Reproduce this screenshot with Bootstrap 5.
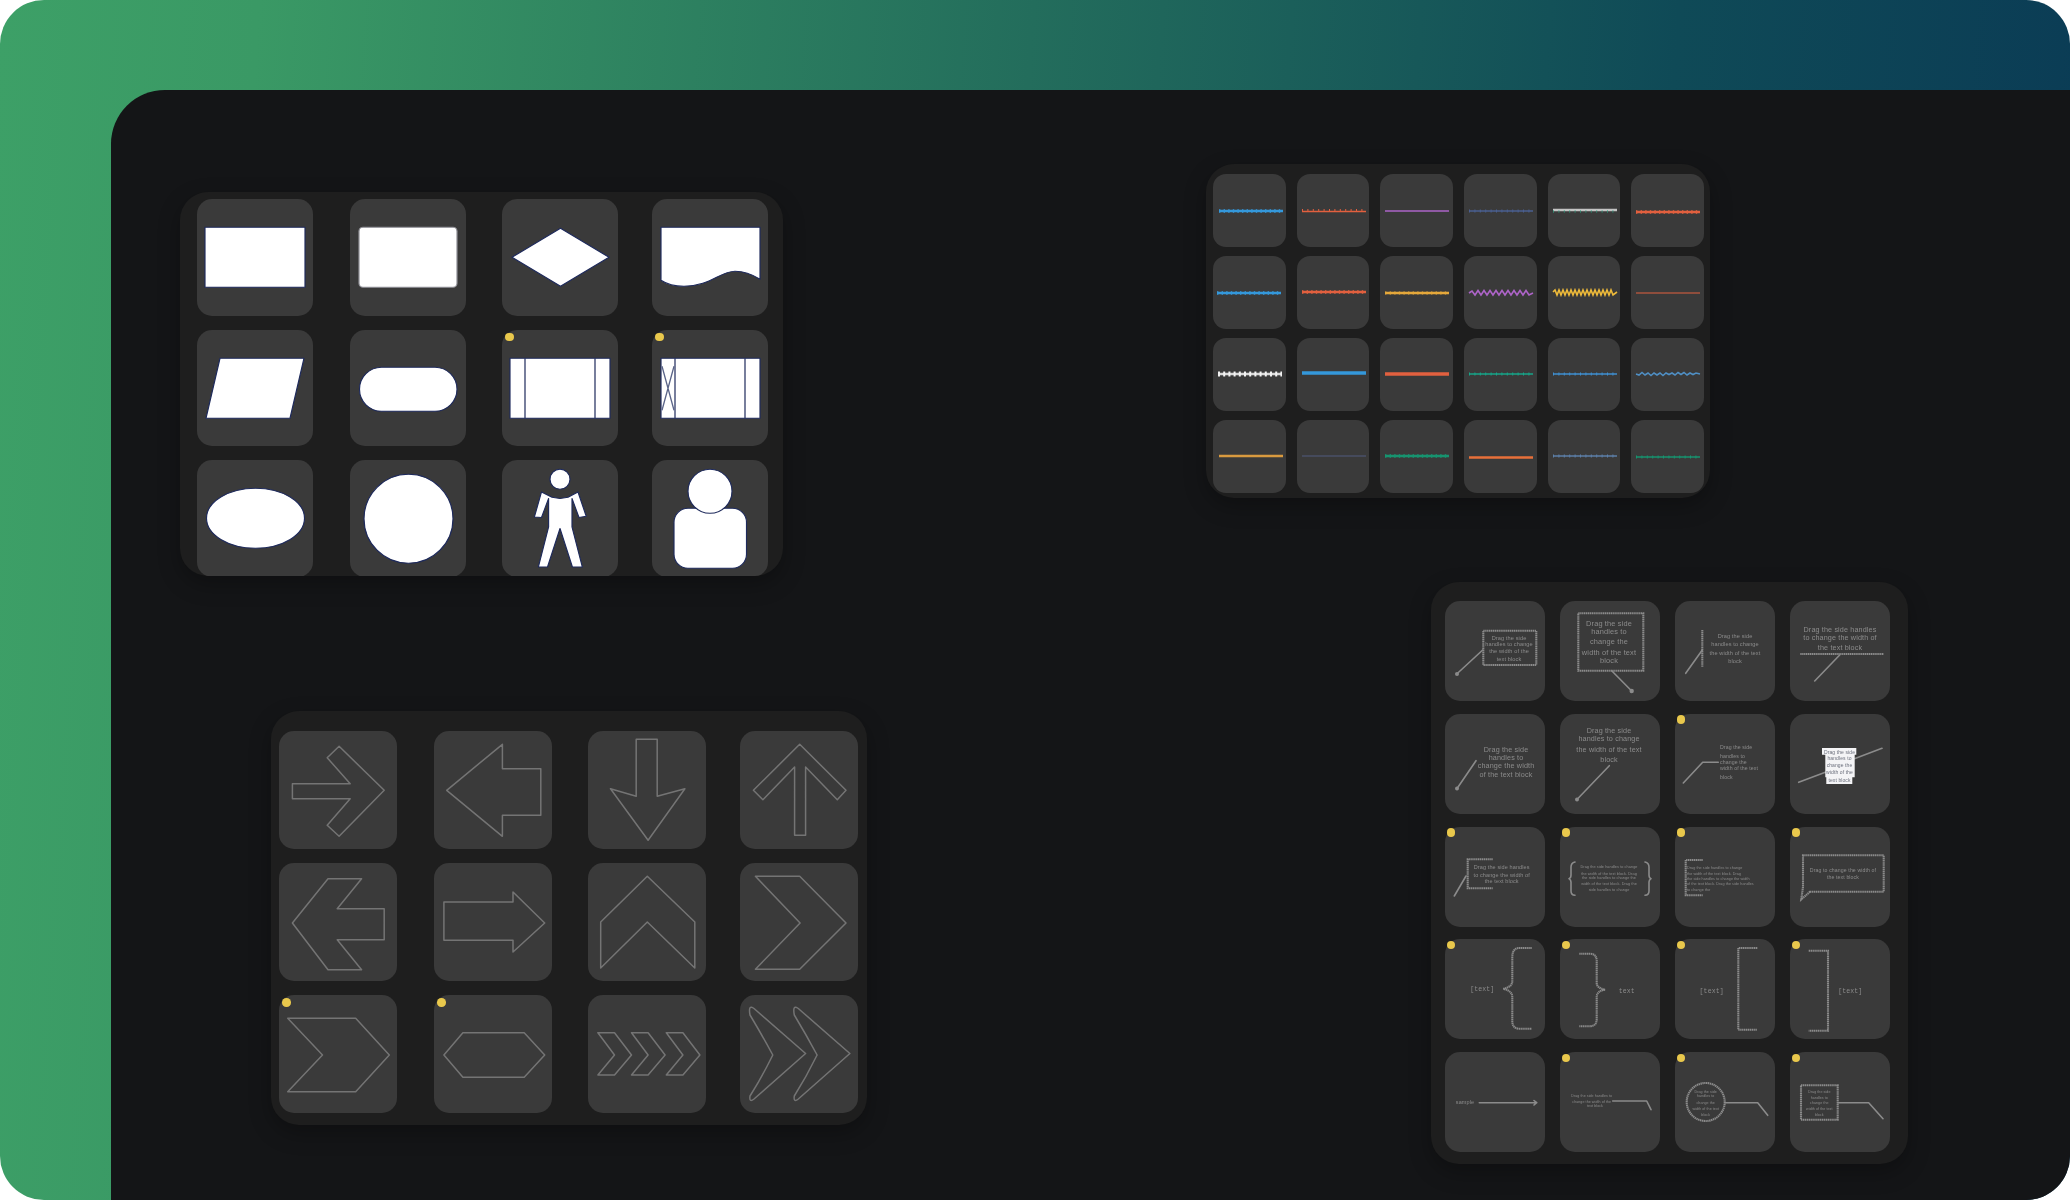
<!DOCTYPE html>
<html lang="en">
<head>
<meta charset="utf-8">
<title>Shape libraries</title>
<link href="https://cdn.jsdelivr.net/npm/bootstrap@5.3.0/dist/css/bootstrap.min.css" rel="stylesheet">
<style>
html,body{height:1200px;background:#fff;overflow:hidden}
.stage{width:2070px;height:1200px;border-radius:44px;padding:90px 0 0 111px;background:linear-gradient(94deg,#3da067 0,#3a9965 12%,#236d5c 48%,#0f4a57 78%,#0a3a55 100%)}
.board{height:1110px;background:#141517;border-top-left-radius:54px}
.col-left{width:1095px}
.shelf{background:#1e1e1e;border-radius:28px;box-shadow:0 8px 22px rgba(0,0,0,.28);overflow:hidden;display:grid}
.tile{background:#3a3a3a;border-radius:15px;position:relative}
.tile svg{display:block;width:100%;height:100%;overflow:visible;filter:blur(.35px)}
.pin{position:absolute;width:8.5px;height:8.5px;border-radius:50%;background:#e9c84c;left:3px;top:3px}
.shelf-a{width:603px;height:384px;margin:102px 0 0 69px;padding:7px 0 0 17px;grid-template-columns:153px 152px 150px 116px;grid-auto-rows:116.5px;row-gap:14px}
.shelf-a .tile{width:116px}
.shelf-b{width:596px;height:414px;margin:135px 0 0 160px;padding:20px 0 0 8px;grid-template-columns:155px 154px 152px 117px;grid-auto-rows:117.5px;row-gap:14.5px}
.shelf-b .tile{width:117.5px}
.shelf-c{width:504px;height:334px;margin-top:74px;padding:10px 0 0 7px;grid-template-columns:repeat(6,72.5px);grid-auto-rows:72.5px;column-gap:11.2px;row-gap:9.5px}
.shelf-d{width:477px;height:582px;margin:84px 0 0 225px;padding:19px 0 0 14px;grid-template-columns:repeat(4,100px);grid-auto-rows:100px;column-gap:15px;row-gap:12.75px}
.shelf-c .tile{border-radius:13px}
.shelf-d .pin{left:1.5px;top:1.5px}
.shelf-d .tile svg{filter:blur(.6px)}
.solid{fill:#fff;stroke:#1e2a5c;stroke-width:1.15;stroke-linejoin:round}
.solid-soft{fill:#fff;stroke:#8f8f96;stroke-width:1.2}
.thin{fill:none;stroke:#1e2a5c;stroke-width:1.2}
.thin-x{fill:none;stroke:#5a6488;stroke-width:1.3}
.outline{fill:none;stroke:#747474;stroke-width:1.5;stroke-linejoin:round}
.wire{fill:none;stroke:#8b8b8b;stroke-width:1.6;stroke-linejoin:round;stroke-linecap:round}
.frame{fill:none;stroke:#8b8b8b;stroke-width:2.1;stroke-dasharray:1.4 .5}
.lead{fill:#8b8b8b}
.words{fill:#8c8c8c;font-family:"Liberation Sans",Arial,sans-serif;text-anchor:middle;dominant-baseline:central;letter-spacing:.02em}
.words-start{text-anchor:start}
.words-dark{fill:#6b6f7c}
.words-mono{font-family:"Liberation Mono","Courier New",monospace;font-size:6.5px}
.stripe{fill:none;stroke-width:1.6}
.stripe-hair{fill:none;stroke-width:1.1}
.stripe-fat{fill:none;stroke-width:2.6}
.stripe-bold{fill:none;stroke-width:3.4}
.ticks{fill:none;stroke-width:3.6;stroke-dasharray:1.4 3.2}
.ticks-wide{fill:none;stroke-width:5;stroke-dasharray:2 3.2}
.ticks-fine{fill:none;stroke-width:3;stroke-dasharray:1 4.4}
</style>
</head>
<body class="m-0">
<div class="stage overflow-hidden">
<main class="board d-flex">
<div class="col-left">

<section class="shelf shelf-a">
<div class="tile"><svg viewBox="0 0 116 116"><rect class="solid" x="8" y="28" width="100" height="60"/></svg></div>
<div class="tile"><svg viewBox="0 0 116 116"><rect class="solid-soft" x="9" y="28" width="98" height="60" rx="4"/></svg></div>
<div class="tile"><svg viewBox="0 0 116 116"><polygon class="solid" points="58.5,29 107,58 58.5,87 10,58"/></svg></div>
<div class="tile"><svg viewBox="0 0 116 116"><path class="solid" d="M9 28H108V80C100 75 92 72 83 72C68 72 58 87 32 87C22 87 15 85 9 81Z"/></svg></div>

<div class="tile"><svg viewBox="0 0 116 116"><polygon class="solid" points="23,28 107,28 93,88 9,88"/></svg></div>
<div class="tile"><svg viewBox="0 0 116 116"><rect class="solid" x="9.5" y="37" width="97.5" height="44" rx="22"/></svg></div>
<div class="tile"><span class="pin"></span><svg viewBox="0 0 116 116"><rect class="solid" x="8" y="28" width="100" height="60"/><path class="thin" d="M23 28V88M93 28V88"/></svg></div>
<div class="tile"><span class="pin"></span><svg viewBox="0 0 116 116"><rect class="solid" x="9" y="28" width="99" height="60"/><path class="thin" d="M23 28V88M93 28V88"/><path class="thin-x" d="M10 36L22 80M22 36L10 80"/></svg></div>

<div class="tile"><svg viewBox="0 0 116 116"><ellipse class="solid" cx="58.5" cy="58" rx="49" ry="30"/></svg></div>
<div class="tile"><svg viewBox="0 0 116 116"><circle class="solid" cx="58.5" cy="58.5" r="44.5"/></svg></div>
<div class="tile"><svg viewBox="0 0 116 116"><polygon class="solid" points="39.5,31.7 32.4,56.7 39.5,57.3 46.6,38.3 46.6,66.7 36.4,106.7 45.5,106.7 58,68.3 70.4,106.7 80.3,106.7 70,66.7 70,38.3 77,57.3 84.2,56 76,31.7 66,37 58,38.3 50,37"/><circle class="solid" cx="58" cy="19" r="10"/></svg></div>
<div class="tile"><svg viewBox="0 0 116 116"><rect class="solid" x="22" y="48" width="72.5" height="60" rx="14"/><circle class="solid" cx="58" cy="31" r="22"/></svg></div>
</section>

<section class="shelf shelf-b">
<div class="tile"><svg viewBox="0 0 117.5 117.5"><polygon class="outline" points="13.4,52.7 71.2,52.7 48.2,26.7 60.1,15.3 105.2,59.3 60.1,105.3 48.2,94.3 71.2,67.7 13.4,67.7"/></svg></div>
<div class="tile"><svg viewBox="0 0 117.5 117.5"><polygon class="outline" points="12.7,59.3 68.4,13.3 68.4,37.7 106.8,37.7 106.8,84.3 68.4,84.3 68.4,105.3"/></svg></div>
<div class="tile"><svg viewBox="0 0 117.5 117.5"><polygon class="outline" points="48.2,8.3 69.2,8.3 69.2,65.3 96.9,57.7 60.1,109.3 22.5,57.7 48.2,65.3"/></svg></div>
<div class="tile"><svg viewBox="0 0 117.5 117.5"><polygon class="outline" points="59.7,13.3 106,59.3 97.3,68.7 65.6,36 65.6,104.3 54.6,104.3 54.6,36 22.9,68.7 13.4,59.3"/></svg></div>

<div class="tile"><svg viewBox="0 0 117.5 117.5"><polygon class="outline" points="13.4,60 49,15.7 82.6,15.7 58.2,45.7 105.2,45.7 105.2,76.7 58.2,76.7 82.6,106.7 49,106.7"/></svg></div>
<div class="tile"><svg viewBox="0 0 117.5 117.5"><polygon class="outline" points="9.9,39 79,39 79,29 110.7,60 79,89 79,77.3 9.9,77.3"/></svg></div>
<div class="tile"><svg viewBox="0 0 117.5 117.5"><polygon class="outline" points="59.3,13.3 106.8,59 106.8,105 59.3,59 12.7,105 12.7,59"/></svg></div>
<div class="tile"><svg viewBox="0 0 117.5 117.5"><polygon class="outline" points="15.4,13.3 59.7,13.3 106,60 59.7,106.3 15.4,106.3 60.1,60"/></svg></div>

<div class="tile"><span class="pin"></span><svg viewBox="0 0 117.5 117.5"><polygon class="outline" points="8.7,23.3 76.7,23.3 110.3,60 76.7,96.7 8.7,96.7 43.5,60"/></svg></div>
<div class="tile"><span class="pin"></span><svg viewBox="0 0 117.5 117.5"><polygon class="outline" points="9.9,60 28.9,37.7 90.2,37.7 110.7,60 90.2,82.3 28.9,82.3"/></svg></div>
<div class="tile"><svg viewBox="0 0 117.5 117.5"><polygon class="outline" points="9.9,37.7 26.5,37.7 43.5,60 26.5,80 9.9,80 26.5,60"/><polygon class="outline" points="43.5,37.7 60.1,37.7 77.1,60 60.1,80 43.5,80 60.1,60"/><polygon class="outline" points="78.3,37.7 94.9,37.7 111.9,60 94.9,80 78.3,80 94.9,60"/></svg></div>
<div class="tile"><svg viewBox="0 0 117.5 117.5"><path class="outline" d="M14 13.5L65.6 58.5L14 104Q9 108 10 101Q22 82 32.8 60Q22 40 10 20Q8 9 14 13.5Z"/><path class="outline" d="M58.3 13.5L109.9 58.5L58.3 104Q53.3 108 54.3 101Q66.3 82 77.1 60Q66.3 40 54.3 20Q52.3 9 58.3 13.5Z"/></svg></div>
</section>
</div>

<div>
<section class="shelf shelf-c">
<div class="tile"><svg viewBox="0 0 72.5 72.5"><g stroke="#3498db"><path class="stripe-fat" d="M6 37H70"/><path class="ticks" d="M6 37H70"/></g></svg></div>
<div class="tile"><svg viewBox="0 0 72.5 72.5"><g stroke="#e2603f"><path class="stripe" d="M5 37.5H69"/><path class="ticks-fine" d="M5 36.5H69"/></g></svg></div>
<div class="tile"><svg viewBox="0 0 72.5 72.5"><path class="stripe" stroke="#ad64c8" d="M5 37H69"/></svg></div>
<div class="tile"><svg viewBox="0 0 72.5 72.5"><g stroke="#4a5f90"><path class="stripe" d="M5 37H69"/><path class="ticks-fine" d="M5 37H69"/></g></svg></div>
<div class="tile"><svg viewBox="0 0 72.5 72.5"><path class="stripe-fat" stroke="#c4c4c4" d="M5 36H69"/><path class="ticks-fine" stroke="#25a27f" stroke-opacity=".55" d="M5 37.5H69"/></svg></div>
<div class="tile"><svg viewBox="0 0 72.5 72.5"><g stroke="#e2603f"><path class="stripe-fat" d="M5 38H69"/><path class="ticks" d="M5 38H69"/></g></svg></div>

<div class="tile"><svg viewBox="0 0 72.5 72.5"><g stroke="#3498db"><path class="stripe-fat" d="M4 37H68"/><path class="ticks" d="M4 37H68"/></g></svg></div>
<div class="tile"><svg viewBox="0 0 72.5 72.5"><g stroke="#e2603f"><path class="stripe-fat" d="M5 36H69"/><path class="ticks" d="M5 36H69"/></g></svg></div>
<div class="tile"><svg viewBox="0 0 72.5 72.5"><g stroke="#e5a83b"><path class="stripe-fat" d="M5 37H69"/><path class="ticks" stroke-opacity=".6" d="M5 37H69"/></g></svg></div>
<div class="tile"><svg viewBox="0 0 72.5 72.5"><polyline class="stripe" stroke="#ad64c8" points="5,37 8,35 11,39 14,34.5 17,39 20,34.5 23,39 26,34.5 29,39 32,34.5 35,39 38,34.5 41,39 44,34.5 47,39 50,34.5 53,39 56,34.5 59,39 62,34.5 65,39 69,37"/></svg></div>
<div class="tile"><svg viewBox="0 0 72.5 72.5"><polyline class="stripe" stroke="#ecb93a" points="5,36 7,34 9,39 11,34 13,39 15,34 17,39 19,34 21,39 23,34 25,39 27,34 29,39 31,34 33,39 35,34 37,39 39,34 41,39 43,34 45,39 47,34 49,39 51,34 53,39 55,34 57,39 59,34 61,39 63,34 65,39 69,36"/></svg></div>
<div class="tile"><svg viewBox="0 0 72.5 72.5"><path class="stripe-hair" stroke="#e2603f" d="M5 37H69"/></svg></div>

<div class="tile"><svg viewBox="0 0 72.5 72.5"><path class="stripe-fat" stroke="#d8d8d8" d="M5 36H69"/><path class="ticks-wide" stroke="#f2f2f2" d="M5 36H69"/></svg></div>
<div class="tile"><svg viewBox="0 0 72.5 72.5"><path class="stripe-bold" stroke="#3498db" d="M5 35H69"/></svg></div>
<div class="tile"><svg viewBox="0 0 72.5 72.5"><path class="stripe-bold" stroke="#e2603f" d="M5 36H69"/></svg></div>
<div class="tile"><svg viewBox="0 0 72.5 72.5"><g stroke="#17a589"><path class="stripe" d="M5 36H69"/><path class="ticks-fine" d="M5 36H69"/></g></svg></div>
<div class="tile"><svg viewBox="0 0 72.5 72.5"><g stroke="#3f8fd0"><path class="stripe" d="M5 36H69"/><path class="ticks-fine" d="M5 36H69"/></g></svg></div>
<div class="tile"><svg viewBox="0 0 72.5 72.5"><polyline class="stripe" stroke="#4f8fc4" points="5,36 8,37 11,34.5 14,37 17,35 20,37.5 23,35 26,37 29,35 32,37.5 35,35 38,36.5 41,35 44,37 47,34.5 50,36.5 53,34.5 56,37 59,35 62,36.5 65,35 69,36"/></svg></div>

<div class="tile"><svg viewBox="0 0 72.5 72.5"><path class="stripe-fat" stroke="#d99a3f" d="M6 36H70"/></svg></div>
<div class="tile"><svg viewBox="0 0 72.5 72.5"><path class="stripe" stroke="#4a5068" d="M5 36H69"/></svg></div>
<div class="tile"><svg viewBox="0 0 72.5 72.5"><g stroke="#17936f"><path class="stripe-fat" d="M5 36H69"/><path class="ticks" d="M5 36H69"/></g></svg></div>
<div class="tile"><svg viewBox="0 0 72.5 72.5"><path class="stripe-fat" stroke="#e8703a" d="M5 37.5H69"/></svg></div>
<div class="tile"><svg viewBox="0 0 72.5 72.5"><g stroke="#5d7fa8"><path class="stripe" d="M5 36H69"/><path class="ticks-fine" d="M5 36H69"/></g></svg></div>
<div class="tile"><svg viewBox="0 0 72.5 72.5"><g stroke="#17936f"><path class="stripe" d="M5 37H69"/><path class="ticks-fine" d="M5 37H69"/></g></svg></div>
</section>

<section class="shelf shelf-d">
<div class="tile"><svg viewBox="0 0 100 100"><rect class="frame" x="38.3" y="29.7" width="53" height="34.3"/><path class="wire" d="M37.7 49L11.7 73"/><circle class="lead" cx="12" cy="73" r="2"/><g class="words" font-size="5.6"><text x="64" y="37">Drag the side</text><text x="64" y="43.3">handles to change</text><text x="64" y="50">the width of the</text><text x="64" y="58">text block</text></g></svg></div>
<div class="tile"><svg viewBox="0 0 100 100"><rect class="frame" x="18.3" y="12.3" width="65" height="57.4"/><path class="wire" d="M51.7 69.7L71.7 90"/><circle class="lead" cx="71.7" cy="90" r="2.2"/><g class="words" font-size="7.4"><text x="49" y="22.3">Drag the side</text><text x="49" y="30.7">handles to</text><text x="49" y="40.7">change the</text><text x="49" y="51.3">width of the text</text><text x="49" y="59.3">block</text></g></svg></div>
<div class="tile"><svg viewBox="0 0 100 100"><path class="frame" d="M27.3 29V65.7"/><path class="wire" d="M27.3 49L10.7 72.3"/><g class="words" font-size="5.6"><text x="60" y="35">Drag the side</text><text x="60" y="43.3">handles to change</text><text x="60" y="51.7">the width of the text</text><text x="60" y="60">block</text></g></svg></div>
<div class="tile"><svg viewBox="0 0 100 100"><path class="frame" d="M10.3 53H93.7"/><path class="wire" d="M49.7 54L24.7 80"/><g class="words" font-size="7.2"><text x="50" y="28">Drag the side handles</text><text x="50" y="36.7">to change the width of</text><text x="50" y="46.7">the text block</text></g></svg></div>

<div class="tile"><svg viewBox="0 0 100 100"><path class="wire" d="M31 46.7L11.7 75"/><circle class="lead" cx="12" cy="74.5" r="2"/><g class="words" font-size="7.2"><text x="61" y="35">Drag the side</text><text x="61" y="43.3">handles to</text><text x="61" y="51.7">change the width</text><text x="61" y="60">of the text block</text></g></svg></div>
<div class="tile"><svg viewBox="0 0 100 100"><path class="wire" d="M49.3 51.7L16.7 85.7"/><circle class="lead" cx="17" cy="85.5" r="2"/><g class="words" font-size="7.2"><text x="49" y="16">Drag the side</text><text x="49" y="24.3">handles to change</text><text x="49" y="35">the width of the text</text><text x="49" y="45">block</text></g></svg></div>
<div class="tile"><span class="pin"></span><svg viewBox="0 0 100 100"><polyline class="wire" points="8.3,69 27.7,48.3 43.3,48.3"/><g class="words words-start" font-size="5.2"><text x="45" y="33.3">Drag the side</text><text x="45" y="41.7">handles to</text><text x="45" y="48.3">change the</text><text x="45" y="54.3">width of the text</text><text x="45" y="62.7">block</text></g></svg></div>
<div class="tile"><svg viewBox="0 0 100 100"><path class="wire" d="M8.7 68.3L35.3 58.3M63.7 45L92 34.3"/><path fill="#f4f4f6" d="M32 34H66.3V40.7H64.7V63.3H62.3V70H36.3V63.3H35.3V40.7H32Z"/><g class="words words-dark" font-size="5"><text x="49.5" y="37.5">Drag the side</text><text x="49.5" y="44">handles to</text><text x="49.5" y="51">change the</text><text x="49.5" y="58">width of the</text><text x="49.5" y="66">text block</text></g></svg></div>

<div class="tile"><span class="pin"></span><svg viewBox="0 0 100 100"><polyline class="frame" points="47.7,32.3 22.7,32.3 22.7,61.3 47.7,61.3"/><path class="wire" d="M21 49L9.3 69"/><g class="words" font-size="5.5"><text x="56.7" y="40.3">Drag the side handles</text><text x="56.7" y="48.3">to change the width of</text><text x="56.7" y="54.3">the text block</text></g></svg></div>
<div class="tile"><span class="pin"></span><svg viewBox="0 0 100 100"><path class="wire" d="M15 35Q11 36 11 40V48Q11 51 9 51.7Q11 53 11 55V64Q11 68 15 68.3M85 35Q89 36 89 40V48Q89 51 91 51.7Q89 53 89 55V64Q89 68 85 68.3"/><g class="words" font-size="3.8"><text x="49" y="40">Drag the side handles to change</text><text x="49" y="46.7">the width of the text block. Drag</text><text x="49" y="51">the side handles to change the</text><text x="49" y="56.7">width of the text block. Drag the</text><text x="49" y="63.3">side handles to change</text></g></svg></div>
<div class="tile"><span class="pin"></span><svg viewBox="0 0 100 100"><polyline class="frame" points="27.7,33 10.7,33 10.7,68.3 27.7,68.3"/><g class="words words-start" font-size="3.7"><text x="12" y="40.7">Drag the side handles to change</text><text x="12" y="46.7">the width of the text block. Drag</text><text x="12" y="51.7">the side handles to change the width</text><text x="12" y="57.3">of the text block. Drag the side handles</text><text x="12" y="63.3">to change the</text></g></svg></div>
<div class="tile"><span class="pin"></span><svg viewBox="0 0 100 100"><path class="frame" d="M20 64.7H93.7V28.3H13V60L11.3 72.3Z"/><g class="words" font-size="5.2"><text x="53" y="43">Drag to change the width of</text><text x="53" y="50">the text block</text></g></svg></div>

<div class="tile"><span class="pin"></span><svg viewBox="0 0 100 100"><path class="frame" d="M86.7 9H73.3Q67.3 10 67.3 18V42Q67.3 48 58.3 49.7Q67.3 52 67.3 58V82Q67.3 89 73.3 89.7H86.7"/><text class="words words-mono" x="37.3" y="50">[text]</text></svg></div>
<div class="tile"><span class="pin"></span><svg viewBox="0 0 100 100"><path class="frame" d="M19.3 14.7H30Q36.7 15 36.7 22V44Q36.7 49 45 50.7Q36.7 52 36.7 58V80Q36.7 87 30 87.3H19.3"/><text class="words words-mono" x="66.7" y="52.3">text</text></svg></div>
<div class="tile"><span class="pin"></span><svg viewBox="0 0 100 100"><polyline class="frame" points="82.3,9 63.3,9 63.3,90.7 82.3,90.7"/><text class="words words-mono" x="36.7" y="52">[text]</text></svg></div>
<div class="tile"><span class="pin"></span><svg viewBox="0 0 100 100"><polyline class="frame" points="18.7,11.7 38,11.7 38,91.7 18.7,91.7"/><text class="words words-mono" x="60.3" y="52">[text]</text></svg></div>

<div class="tile"><svg viewBox="0 0 100 100"><path class="wire" d="M34.3 50.7H91.7M89 48.5L91.7 50.7L89 53"/><text class="words" font-size="5.5" x="20" y="50">sample</text></svg></div>
<div class="tile"><span class="pin"></span><svg viewBox="0 0 100 100"><polyline class="wire" points="52.7,49 86.7,49 91,57.7"/><g class="words" font-size="3.6"><text x="31.7" y="44">Drag the side handles to</text><text x="31.7" y="50">change the width of the</text><text x="35" y="54.3">text block</text></g></svg></div>
<div class="tile"><span class="pin"></span><svg viewBox="0 0 100 100"><circle class="frame" cx="30.7" cy="50" r="19"/><polyline class="wire" points="50,50.7 82.7,50.7 92.7,63.3"/><g class="words" font-size="3.6"><text x="30.7" y="40">Drag the side</text><text x="30.7" y="44.3">handles to</text><text x="30.7" y="50.7">change the</text><text x="30.7" y="56.7">width of the text</text><text x="30.7" y="63.3">block</text></g></svg></div>
<div class="tile"><span class="pin"></span><svg viewBox="0 0 100 100"><rect class="frame" x="11" y="33.3" width="36.7" height="34.4"/><polyline class="wire" points="47.7,50.7 78.7,50.7 93,66.7"/><g class="words" font-size="3.6"><text x="29.3" y="40">Drag the side</text><text x="29.3" y="46">handles to</text><text x="29.3" y="50.7">change the</text><text x="29.3" y="57.3">width of the text</text><text x="29.3" y="62.7">block</text></g></svg></div>
</section>
</div>
</main>
</div>
<script src="https://cdn.jsdelivr.net/npm/bootstrap@5.3.0/dist/js/bootstrap.bundle.min.js"></script>
</body>
</html>
